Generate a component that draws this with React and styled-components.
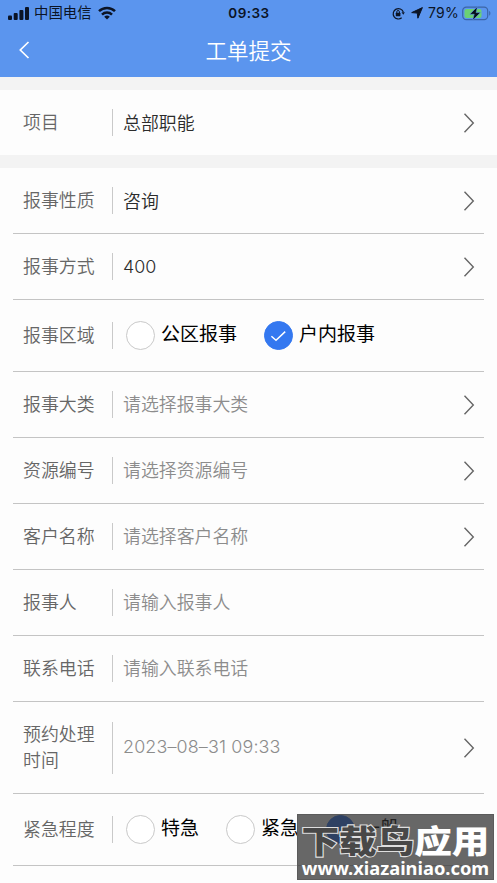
import React from 'react';
import styled, { createGlobalStyle } from 'styled-components';

const GlobalStyle = createGlobalStyle`
  * {
    box-sizing: border-box;
  }

  body {
    margin: 0;
    background: #fdfdfd;
    font-family: 'Liberation Sans', 'Noto Sans CJK SC', sans-serif;
  }
`;

const Page = styled.div`
  position: relative;
  height: 883px;
  overflow: hidden;
  background: #fdfdfd;
`;

const Header = styled.header`
  height: 77px;
  background: #5b95ee;
`;

const StatusBar = styled.div`
  display: grid;
  grid-template-columns: 1fr auto 1fr;
  align-items: center;
  height: 26px;
  padding: 0 6px 0 8px;
  color: #0b1426;
  font-family: Inter, 'Noto Sans CJK SC', sans-serif;
  font-size: 14px;
  line-height: 26px;
`;

const StatusGroup = styled.div`
  display: flex;
  align-items: center;
  justify-content: ${(props) => (props.$end ? 'flex-end' : 'flex-start')};

  svg {
    display: block;
    flex: none;
  }
`;

const Carrier = styled.span`
  margin: 0 6px 0 4px;
  font-size: 14.4px;
`;

const Clock = styled.span`
  margin-right: 1px;
  font-size: 13.5px;
  font-weight: 600;
  letter-spacing: 0.45px;
`;

const Percent = styled.span`
  margin: 0 3px 0 5px;
  font-size: 14px;
  letter-spacing: 0.3px;
`;

const NavBar = styled.div`
  display: grid;
  grid-template-columns: 60px 1fr 60px;
  align-items: center;
  height: 48px;
  color: #fff;

  svg {
    display: block;
    margin-left: 18px;
  }

  h1 {
    margin: 0;
    padding-top: 4px;
    font-size: 21.5px;
    font-weight: 350;
    line-height: 40px;
    text-align: center;
  }
`;

const Section = styled.section`
  margin-top: 13px;
  background: #fdfdfd;
  box-shadow: 0 -13px 0 #f3f3f3;
`;

const Row = styled.div`
  display: flex;
  align-items: center;
  height: ${(props) => props.$height || 66}px;
  margin: 0 13px;
  padding: 0 9px 0 10px;
  border-bottom: ${(props) => (props.$plain ? 'none' : '1px solid #c4c4c4')};
`;

const Label = styled.div`
  display: flex;
  align-items: center;
  flex: none;
  width: 90px;
  min-height: 27px;
  padding-right: 16px;
  border-right: 1px solid #c9c9c9;
  color: #666;
  font-size: 17.9px;
  font-weight: 350;
  line-height: 26px;
`;

const Value = styled.div`
  flex: 1;
  margin-left: 10px;
  padding-top: ${(props) => (props.$muted || props.$latin ? 0 : 2)}px;
  color: ${(props) => (props.$muted ? '#8c8c8c' : '#2c2c2c')};
  font-family: ${(props) => (props.$latin ? 'Inter' : "'Liberation Sans'")}, 'Noto Sans CJK SC', sans-serif;
  font-size: 17.9px;
  font-weight: 350;
  line-height: 26px;
`;

const DateValue = styled(Value)`
  padding-bottom: 1px;
  font-weight: 300;
  letter-spacing: 0.15px;
`;

const Options = styled.div`
  display: flex;
  gap: 27px;
  margin-left: 13px;
`;

const Option = styled.div`
  display: flex;
  align-items: center;
  gap: 6px;
  color: #000;
  font-size: 19px;
  line-height: 29px;
  white-space: nowrap;

  span {
    margin-top: -3px;
  }
`;

const Radio = styled.i`
  display: grid;
  place-items: center;
  width: 29px;
  height: 29px;
  margin-top: -1px;
  border: 1px solid ${(props) => (props.$checked ? '#3478f0' : '#c9c9c9')};
  border-radius: 50%;
  background: ${(props) => (props.$checked ? '#3478f0' : '#fff')};
`;

const Watermark = styled.div`
  position: absolute;
  left: 297px;
  top: 814px;
  width: 197px;
  height: 66px;
  border: 1px solid #5b5b5b;
  background: rgba(44, 44, 44, 0.72);
  color: #fff;
  text-align: center;
  white-space: nowrap;
`;

const WatermarkName = styled.div`
  height: 44px;
  font-family: 'Noto Sans CJK SC', sans-serif;
  font-size: 37.6px;
  font-weight: 900;
  line-height: 49px;
  transform: scaleY(0.86);

  span {
    color: #484848;
    -webkit-text-stroke: 2.5px #dedede;
    paint-order: stroke fill;
  }
`;

const WatermarkUrl = styled.div`
  font-family: 'Noto Sans', sans-serif;
  font-size: 18.3px;
  font-weight: 700;
  line-height: 18px;
`;

const SignalIcon = () => (
  <svg width="22" height="13" viewBox="0 0 22 13" fill="currentColor">
    <rect x="0" y="8.5" width="4" height="4.5" rx="1" />
    <rect x="5.7" y="6" width="4" height="7" rx="1" />
    <rect x="11.4" y="3" width="4" height="10" rx="1" />
    <rect x="17" y="0" width="4" height="13" rx="1" />
  </svg>
);

const WifiIcon = () => (
  <svg width="18" height="14" viewBox="0 0 18 14" fill="none" stroke="currentColor" strokeWidth="2.5">
    <path d="M1 5.2a11.5 11.5 0 0 1 16 0M4 8.6a7.2 7.2 0 0 1 10 0" />
    <path d="M9 13.5 6.2 10.8a4 4 0 0 1 5.6 0Z" fill="currentColor" stroke="none" />
  </svg>
);

const LockIcon = () => (
  <svg width="13" height="13" viewBox="0 0 13 13" fill="none" stroke="currentColor" strokeWidth="1.2">
    <path d="M9.7 10.8A5.2 5.2 0 1 1 11.3 5" />
    <path d="M9.5 5.3h3.3l-1.5 2.4Z" fill="currentColor" stroke="none" />
    <rect x="3.8" y="5.7" width="4.6" height="3.6" rx=".5" fill="currentColor" stroke="none" />
    <path d="M4.8 6V4.8a1.3 1.3 0 0 1 2.6 0V6" strokeWidth="1" />
  </svg>
);

const LocationIcon = () => (
  <svg width="18" height="12" viewBox="-6 0 18 12" fill="currentColor">
    <path d="M11.4.6 6.9 11.2 6.3 6.1.7 5.6Z" stroke="currentColor" strokeWidth="1" strokeLinejoin="round" />
  </svg>
);

const BatteryIcon = () => (
  <svg width="29" height="15" viewBox="0 0 29 15">
    <rect x=".7" y="1.1" width="25" height="12.6" rx="3.6" fill="none" stroke="#3c65a6" strokeWidth="1.2" />
    <rect x="2.5" y="2.9" width="17" height="9" rx="2" fill="#6bd174" />
    <path d="M27.2 5.1c1.6.7 1.6 4 0 4.7Z" fill="#3c65a6" />
    <path d="M15.5.5 7.8 8.3h4.4l-1.7 6.2L18.5 6.6h-4.4Z" fill="#071018" stroke="#5b95ee" strokeWidth=".6" />
  </svg>
);

const BackIcon = () => (
  <svg width="12" height="18" viewBox="0 0 12 18" fill="none" stroke="currentColor" strokeWidth="1.7">
    <path d="M10.5 1 2.3 9l8.2 8" />
  </svg>
);

const Arrow = () => (
  <svg width="12" height="20" viewBox="0 0 12 20" fill="none" stroke="#666" strokeWidth="1.4">
    <path d="m1.5.7 8.8 9.3-8.8 9.3" />
  </svg>
);

const CheckIcon = () => (
  <svg width="17" height="13" viewBox="0 0 17 13" fill="none" stroke="#fff" strokeWidth="1.5">
    <path d="m1.4 7.3 4.6 3.9 9.2-8.6" />
  </svg>
);

const RadioGroup = ({ items, checked }) => (
  <Options>
    {items.map((item) => (
      <Option key={item}>
        <Radio $checked={item === checked}>{item === checked && <CheckIcon />}</Radio>
        <span>{item}</span>
      </Option>
    ))}
  </Options>
);

const pickers = [
  { label: '报事大类', hint: '请选择报事大类', arrow: true },
  { label: '资源编号', hint: '请选择资源编号', arrow: true },
  { label: '客户名称', hint: '请选择客户名称', arrow: true },
  { label: '报事人', hint: '请输入报事人' },
  { label: '联系电话', hint: '请输入联系电话' },
];

function App() {
  return (
    <Page>
      <GlobalStyle />
      <Header>
        <StatusBar>
          <StatusGroup>
            <SignalIcon />
            <Carrier>中国电信</Carrier>
            <WifiIcon />
          </StatusGroup>
          <Clock>09:33</Clock>
          <StatusGroup $end>
            <LockIcon />
            <LocationIcon />
            <Percent>79%</Percent>
            <BatteryIcon />
          </StatusGroup>
        </StatusBar>
        <NavBar>
          <BackIcon />
          <h1>工单提交</h1>
        </NavBar>
      </Header>

      <Section>
        <Row $height={65} $plain>
          <Label>项目</Label>
          <Value>总部职能</Value>
          <Arrow />
        </Row>
      </Section>

      <Section>
        <Row>
          <Label>报事性质</Label>
          <Value>咨询</Value>
          <Arrow />
        </Row>
        <Row>
          <Label>报事方式</Label>
          <Value $latin>400</Value>
          <Arrow />
        </Row>
        <Row $height={72}>
          <Label>报事区域</Label>
          <RadioGroup items={['公区报事', '户内报事']} checked="户内报事" />
        </Row>
        {pickers.map((row) => (
          <Row key={row.label}>
            <Label>{row.label}</Label>
            <Value $muted>{row.hint}</Value>
            {row.arrow && <Arrow />}
          </Row>
        ))}
        <Row $height={92}>
          <Label>
            预约处理
            <br />
            时间
          </Label>
          <DateValue $muted $latin>2023–08–31 09:33</DateValue>
          <Arrow />
        </Row>
        <Row $height={72}>
          <Label>紧急程度</Label>
          <RadioGroup items={['特急', '紧急', '一般']} checked="一般" />
        </Row>
      </Section>

      <Watermark>
        <WatermarkName>
          <span>下载鸟</span>应用
        </WatermarkName>
        <WatermarkUrl>www.xiazainiao.com</WatermarkUrl>
      </Watermark>
    </Page>
  );
}

export default App;
